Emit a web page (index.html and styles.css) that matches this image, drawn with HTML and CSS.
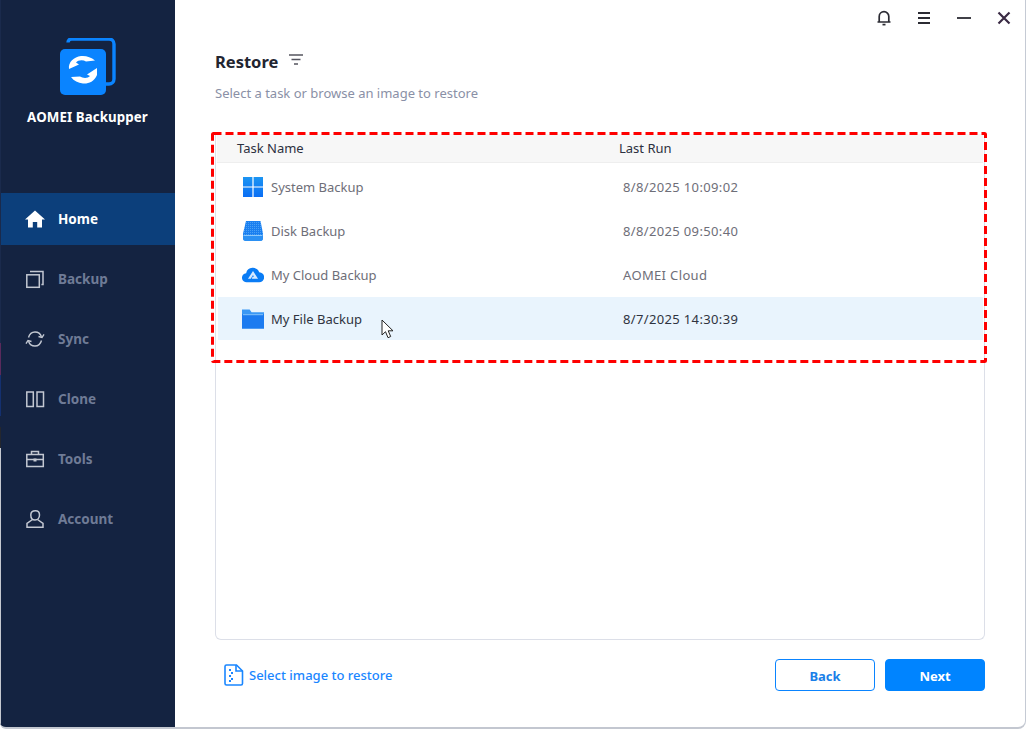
FILE: index.html
```html
<!DOCTYPE html>
<html lang="en">
<head>
<meta charset="utf-8">
<title>AOMEI Backupper - Restore</title>
<link rel="stylesheet" href="styles.css">
</head>
<body>
<div class="window">
  <aside class="sidebar">
    <div class="brand">
      <svg class="logo" width="58" height="58" viewBox="0 0 58 58">
        <path d="M10 4.500C10 2.500 11.500 1 13.500 1H51a5 5 0 0 1 5 5v35a5 5 0 0 1-5 5h-3" fill="none" stroke="#0a84ff" stroke-width="3.400"/>
        <rect x="2" y="11" width="46" height="46" rx="5" fill="#0a84ff"/>
        <path d="M11 31c-1-7 5-12 12-13 5-.5 10 1 14 4.500l-9 1c-3-1.800-8-1.500-10 1l3 2-10 4.500z" fill="#fff"/>
        <path d="M39 37c-3 7-9 9-14 8.500-5-.5-9-2.500-12-6.500l9-.5c3 2 8 2 10-.5l-3-1.500 10-6.500z" fill="#fff"/>
      </svg>
      <div class="brand-name">AOMEI Backupper</div>
    </div>
    <nav class="nav">
      <a class="nav-item active">
        <svg class="nav-icon" width="20" height="20" viewBox="0 0 20 20"><path d="M10 1.500 0 10.500h3v8h4.800v-5.500h4.400v5.500H17v-8h3z" fill="#fff"/></svg>
        <span>Home</span>
      </a>
      <a class="nav-item">
        <svg class="nav-icon" width="20" height="20" viewBox="0 0 20 20" fill="none" stroke="#c3c8d2" stroke-width="1.500"><rect x="1.800" y="5.800" width="12.500" height="12.500"/><path d="M5 2.500h13v13h-1.600"/></svg>
        <span>Backup</span>
      </a>
      <a class="nav-item">
        <svg class="nav-icon" width="20" height="20" viewBox="0 0 20 20" fill="none" stroke="#c3c8d2" stroke-width="1.400"><path d="M3.500 8.500C4.500 5 7 3 10 3c3 0 5.500 1.800 6.500 4.800"/><path d="M16.500 11.500C15.500 15 13 17 10 17c-3 0-5.500-1.800-6.500-4.800"/><path d="M13.500 7.500l3.500 1 2-3.200M6.500 12.500l-3.500-1-2 3.200"/></svg>
        <span>Sync</span>
      </a>
      <a class="nav-item">
        <svg class="nav-icon" width="20" height="20" viewBox="0 0 20 20" fill="none" stroke="#c3c8d2" stroke-width="1.500"><rect x="1.800" y="3" width="6.500" height="14.500"/><rect x="12" y="3" width="6.500" height="14.500"/></svg>
        <span>Clone</span>
      </a>
      <a class="nav-item">
        <svg class="nav-icon" width="20" height="20" viewBox="0 0 20 20" fill="none" stroke="#c3c8d2" stroke-width="1.500"><rect x="1.800" y="5.500" width="16.500" height="12"/><path d="M6.500 5.500V2.500h7v3M1.800 10.500h16.500"/><rect x="8.500" y="9.500" width="3" height="3" fill="#c3c8d2" stroke="none"/></svg>
        <span>Tools</span>
      </a>
      <a class="nav-item">
        <svg class="nav-icon" width="20" height="20" viewBox="0 0 20 20" fill="none" stroke="#c3c8d2" stroke-width="1.500"><path d="M10.500 1.800c2.600 0 4 1.800 4 4.200 0 2.800-1.800 5-4.500 5s-4.200-2.200-4.200-5c0-2.400 1.800-4.200 4.700-4.200z"/><path d="M7.500 10.500 2 14.500v3.800h16v-3.800l-5.500-4"/></svg>
        <span>Account</span>
      </a>
    </nav>
  </aside>

  <main class="content">
    <div class="titlebar">
      <svg class="bell" width="16" height="16" viewBox="0 0 16 16" fill="none" stroke="#2b2b33" stroke-width="1.700"><path d="M3.200 11.800V6.500a4.800 4.800 0 0 1 9.600 0v5.300M1.500 12h13"/><path d="M6.500 14.600h3"/></svg>
      <svg width="14" height="14" viewBox="0 0 14 14" stroke="#2b2b33" stroke-width="1.800"><path d="M1 2h12M1 7h12M1 12h12"/></svg>
      <svg width="14" height="14" viewBox="0 0 14 14" stroke="#2b2b33" stroke-width="1.800"><path d="M0 7h14"/></svg>
      <svg width="14" height="14" viewBox="0 0 14 14" stroke="#3a2a44" stroke-width="2.200"><path d="M1.500 1.500l11 11M12.500 1.500l-11 11"/></svg>
    </div>

    <div class="heading">
      <h1>Restore</h1>
      <svg width="14" height="12" viewBox="0 0 14 12" stroke="#55555f" stroke-width="1.500"><path d="M0 1h14M2.500 5.500h9M5 10h4"/></svg>
    </div>
    <p class="subtitle">Select a task or browse an image to restore</p>

    <section class="panel">
      <div class="table-head">
        <span class="col-name">Task Name</span>
        <span class="col-run">Last Run</span>
      </div>
      <div class="row">
        <svg class="row-icon" width="22" height="22" viewBox="0 0 22 22">
          <defs><linearGradient id="win" x1="0" y1="0" x2="0" y2="1"><stop offset="0" stop-color="#1c95f2"/><stop offset="1" stop-color="#0a6ef5"/></linearGradient></defs>
          <rect x="1" y="1" width="20" height="20" fill="url(#win)"/>
          <path d="M11 0v22M0 11h22" stroke="#fff" stroke-width="1.200"/>
        </svg>
        <span class="row-name">System Backup</span>
        <span class="row-run">8/8/2025 10:09:02</span>
      </div>
      <div class="row">
        <svg class="row-icon" width="22" height="22" viewBox="0 0 22 22">
          <defs><pattern id="dots" width="2" height="2" patternUnits="userSpaceOnUse"><rect width="2" height="2" fill="#1a7ff0"/><rect width="1" height="1" fill="#4aa0f5"/></pattern></defs>
          <path d="M4 1h14.500l2.500 12.500v4.500a3 3 0 0 1-3 3H4a3 3 0 0 1-3-3v-4.500z" fill="url(#dots)"/>
          <path d="M1.500 15.500h19" stroke="#8cc8fb" stroke-width="1"/>
          <path d="M1 16v2a3 3 0 0 0 3 3h14a3 3 0 0 0 3-3v-2z" fill="#2b90f3"/>
        </svg>
        <span class="row-name">Disk Backup</span>
        <span class="row-run">8/8/2025 09:50:40</span>
      </div>
      <div class="row">
        <svg class="row-icon" width="24" height="22" viewBox="0 0 24 22"><path d="M5.500 19a5 5 0 0 1-1-10 7.500 7.500 0 0 1 14.300-1 5.500 5.500 0 0 1-.3 11z" fill="#0a7cf5"/><path d="M12 6.500 6.500 15h3l2.500-4 1 2h-1.500l-.8 2H17.500z" fill="#d6e9ff"/></svg>
        <span class="row-name">My Cloud Backup</span>
        <span class="row-run">AOMEI Cloud</span>
      </div>
      <div class="row selected">
        <svg class="row-icon" width="23" height="22" viewBox="0 0 23 22"><path d="M0 1h8l2 3h13v17H0z" fill="#3a98f5"/><path d="M0 6h23v15H0z" fill="#1c7bf0"/><path d="M1 6.500h21" stroke="#8cc8fb" stroke-width="1"/></svg>
        <span class="row-name">My File Backup</span>
        <span class="row-run">8/7/2025 14:30:39</span>
      </div>
    </section>

    <div class="footer">
      <a class="image-link">
        <svg width="20" height="22" viewBox="0 0 20 22" fill="none"><path d="M2.500 1h10l6 6v12.500a1.500 1.500 0 0 1-1.500 1.500H2.500A1.500 1.500 0 0 1 1 19.500v-17A1.500 1.500 0 0 1 2.500 1z" stroke="#1a86ff" stroke-width="1.600"/><path d="M12 1v6h6.500" stroke="#1a86ff" stroke-width="1.600"/><path d="M5 5h2v2H5zM7 8h2v2H7zM5 11h2v2H5zM7 14h2v2H7zM5 16h2v2H5z" fill="#1a86ff"/></svg>
        <span>Select image to restore</span>
      </a>
      <div class="actions">
        <button class="btn btn-ghost">Back</button>
        <button class="btn btn-primary">Next</button>
      </div>
    </div>

    <svg class="cursor" width="14" height="20" viewBox="0 0 14 20"><path d="M1 1v15l3.500-3.300 2.500 6 2.700-1.200-2.500-5.700H12z" fill="#fff" stroke="#222" stroke-width="1"/></svg>
    <svg class="highlight-box" width="776" height="231" viewBox="0 0 776 231" fill="none"><rect x="1.500" y="1.500" width="773" height="228" rx="1" stroke="#fe0000" stroke-width="3" stroke-dasharray="8 4"/></svg>
  </main>
</div>
</body>
</html>
```
FILE: styles.css
```css
* { box-sizing: border-box; }
html, body { margin: 0; height: 100%; background: #fff; }
body {
  font-family: "Noto Sans", "Open Sans", sans-serif;
  overflow: hidden;
}
.window {
  width: 1026px;
  height: 729px;
  display: flex;
  background: #fff;
  border-right: 1px solid #c5cad4;
  border-bottom: 2px solid #c3c7d0;
  border-bottom-left-radius: 6px;
  border-bottom-right-radius: 8px;
  overflow: hidden;
}
.sidebar {
  position: relative;
  width: 175px;
  flex: none;
  background: #142341;
  display: flex;
  flex-direction: column;
}
.sidebar::before {
  content: "";
  position: absolute;
  left: 0;
  top: 0;
  bottom: 0;
  width: 1px;
  background: linear-gradient(to bottom,
    #1a2a4c 0, #1a2a4c 343px,
    #5a2a5c 343px, #5a2a5c 375px,
    #14306f 375px, #14306f 416px,
    #142341 416px, #142341 427px,
    #24272e 427px, #24272e 448px,
    #c5c8d0 448px, #c5c8d0 100%);
}
.brand {
  height: 193px;
  display: flex;
  flex-direction: column;
  align-items: center;
  padding-top: 38px;
}
.logo { display: block; margin-left: -1px; }
.brand-name {
  margin-top: 12px;
  color: #fff;
  font-size: 13.300px;
  font-weight: 700;
  line-height: 18px;
  letter-spacing: 0.1px;
}
.nav { display: flex; flex-direction: column; gap: 8px; }
.nav-item {
  height: 52px;
  display: flex;
  align-items: center;
  gap: 13px;
  padding-left: 25px;
  color: #6f7b96;
  font-size: 13.500px;
  font-weight: 700;
}
.nav-item.active { background: #0c3f7b; color: #fff; }
.nav-icon { flex: none; }
.content {
  position: relative;
  flex: 1;
  display: flex;
  flex-direction: column;
  padding: 0 40px;
  min-width: 0;
}
.titlebar {
  position: absolute;
  top: 10px;
  right: 14px;
  display: flex;
  align-items: center;
  gap: 26px;
}
.bell { margin-right: -1px; }
.heading {
  display: flex;
  align-items: center;
  gap: 11px;
  margin-top: 50px;
  height: 24px;
}
.heading svg { margin-top: -4px; }
h1 {
  margin: 0;
  font-size: 16.500px;
  font-weight: 700;
  line-height: 24px;
  color: #222530;
}
.subtitle {
  margin: 9px 0 0;
  font-size: 13px;
  line-height: 20px;
  color: #8a90a6;
}
.panel {
  margin-top: 31px;
  height: 506px;
  width: 770px;
  border: 1px solid #dcdfe8;
  border-top: 0;
  border-radius: 0 0 6px 6px;
}
.table-head {
  height: 29px;
  margin: 0 1px 2px 1px;
  background: #f7f7f7;
  border-bottom: 1px solid #eeeeee;
  display: flex;
  align-items: center;
  font-size: 13px;
  color: #2c3040;
}
.col-name { width: 402px; padding-left: 20px; }
.row {
  height: 44px;
  display: flex;
  align-items: center;
  padding-left: 26px;
  font-size: 13px;
  color: #6e6e78;
}
.row-icon { flex: none; margin-right: 7px; width: 22px; }
.row-name { width: 352px; }
.row-run { letter-spacing: 0.35px; }
.selected {
  height: 43px;
  margin: 0 1px 0 2px;
  padding-left: 24px;
  background: #e9f4fd;
  color: #2f3340;
}
.footer {
  display: flex;
  align-items: center;
  justify-content: space-between;
  width: 770px;
  margin-top: 19px;
  height: 32px;
}
.image-link {
  display: flex;
  align-items: center;
  gap: 5px;
  padding-left: 9px;
  color: #1a86ff;
  font-size: 13px;
  font-weight: 500;
}
.actions { display: flex; gap: 10px; }
.btn {
  width: 100px;
  height: 32px;
  border-radius: 4px;
  font-family: inherit;
  font-size: 13px;
  font-weight: 700;
  padding: 1px 0 0;
}
.btn-ghost { background: #fff; border: 1px solid #0a84ff; color: #1a7fe8; }
.btn-primary { background: #0084ff; border: 1px solid #0084ff; color: #fff; }
.cursor { position: absolute; left: 206px; top: 319px; }
.highlight-box {
  position: absolute;
  left: 36px;
  top: 132px;
  pointer-events: none;
}
```
